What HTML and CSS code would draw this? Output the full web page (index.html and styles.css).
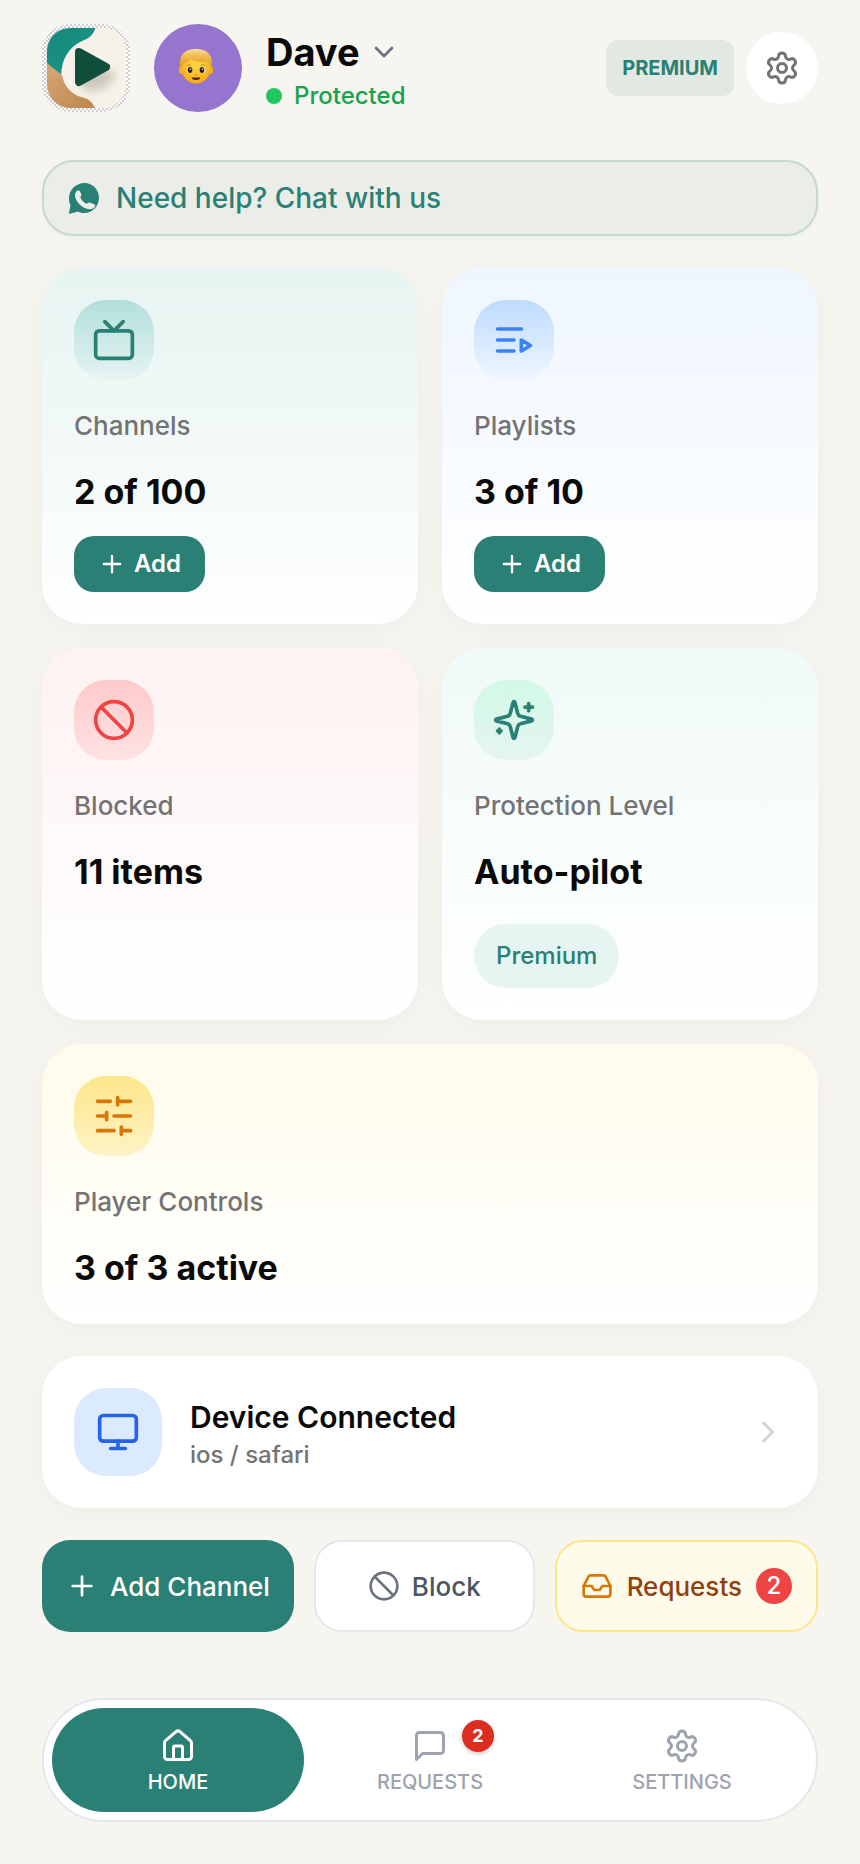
FILE: index.html
```
<!DOCTYPE html>
<html lang="en">
<head>
  <meta charset="UTF-8" />
  <meta name="viewport" content="width=device-width, initial-scale=1.0"/>
  <title>Dashboard</title>
  <link rel="stylesheet" href="styles.css">
</head>
<body>
  <header class="header">
    <svg class="logo" viewBox="0 0 88 88" aria-label="Logo">
      <defs>
        <pattern id="checker" width="4" height="4" patternUnits="userSpaceOnUse">
          <rect width="4" height="4" fill="#fcfcfc"/>
          <path d="M0 0h2v2H0zM2 2h2v2H2z" fill="#cfcfd1"/>
        </pattern>
        <linearGradient id="teal" x1="0" y1="0" x2="1" y2="1">
          <stop offset="0" stop-color="#158477"/>
          <stop offset="1" stop-color="#1b9c8c"/>
        </linearGradient>
        <linearGradient id="sand" x1="0" y1="0" x2="1" y2="1">
          <stop offset="0" stop-color="#d9ab7a"/>
          <stop offset="1" stop-color="#bd8349"/>
        </linearGradient>
        <clipPath id="tile"><rect x="5" y="4" width="79" height="80" rx="23"/></clipPath>
        <filter id="soft" x="-50%" y="-50%" width="200%" height="200%"><feGaussianBlur stdDeviation="4"/></filter>
      </defs>
      <rect width="88" height="88" rx="28" fill="url(#checker)"/>
      <g clip-path="url(#tile)">
        <rect width="88" height="88" fill="#f6f2e9"/>
        <path d="M0 0H54C53 10 48 14 40 17C27 23 20 34 19 51L0 36Z" fill="url(#teal)"/>
        <path d="M0 35L20 51C22 62 29 70 39 73C48 75 52 79 54 88H0Z" fill="url(#sand)"/>
        <path d="M38 34L74 50C68 64 54 70 40 65Z" fill="#8f8879" opacity=".4" filter="url(#soft)"/>
      </g>
      <path d="M37 28L64 43L37 58Z" fill="#0f4f3c" stroke="#0f4f3c" stroke-width="8" stroke-linejoin="round"/>
    </svg>
    <div class="avatar">
      <svg viewBox="0 0 36 36" aria-label="Boy">
        <defs>
          <linearGradient id="hair" x1="0" y1="0" x2="0" y2="1">
            <stop offset="0" stop-color="#fbe0a0"/>
            <stop offset=".3" stop-color="#f3c25a"/>
            <stop offset="1" stop-color="#dc9a24"/>
          </linearGradient>
          <radialGradient id="face" cx=".5" cy=".4" r=".6">
            <stop offset="0" stop-color="#ffd94a"/>
            <stop offset="1" stop-color="#f9ad12"/>
          </radialGradient>
        </defs>
        <ellipse cx="3.5" cy="22" rx="2.5" ry="4" fill="#f5ac1c"/>
        <ellipse cx="32.5" cy="22" rx="2.5" ry="4" fill="#f5ac1c"/>
        <path d="M3.5 15C3.5 6 10 3 18 3S32.5 6 32.5 15V20C32.5 30 25 35.5 18 35.5S3.5 30 3.5 20Z" fill="url(#face)"/>
        <path d="M2 19C1 6 7 1 18 1S35 6 34 19L32 18C32 16 31 14 29 13C24 15 16 14 12 11C12 13 10 14 8 14C6 15 5 16 4 18Z" fill="url(#hair)"/>
        <ellipse cx="11.5" cy="22" rx="2.8" ry="3.2" fill="#fff"/>
        <ellipse cx="24.5" cy="22" rx="2.8" ry="3.2" fill="#fff"/>
        <ellipse cx="12" cy="22" rx="2.4" ry="3" fill="#33200e"/>
        <ellipse cx="24" cy="22" rx="2.4" ry="3" fill="#33200e"/>
        <circle cx="12.5" cy="21" r=".8" fill="#fff"/>
        <circle cx="24.5" cy="21" r=".8" fill="#fff"/>
        <path d="M9 17.5Q11 16 13 17.5M23 17.5Q25 16 27 17.5" fill="none" stroke="#c08420" stroke-width=".8"/>
        <path d="M16.500 26.500Q18 27.500 19.500 26.500" fill="none" stroke="#d58a12" stroke-width="1"/>
        <path d="M13.500 29.500H22.500Q22 32 18 32T13.500 29.500Z" fill="#4a2408"/>
      </svg>
    </div>
    <div class="profile">
      <button class="profile-name">
        Dave
        <svg class="icon icon-sm" viewBox="0 0 24 24"><path d="m6 9 6 6 6-6"/></svg>
      </button>
      <div class="profile-status"><span class="dot"></span>Protected</div>
    </div>
    <span class="plan">PREMIUM</span>
    <button class="round-btn" aria-label="Settings">
      <svg class="icon icon-md" viewBox="0 0 24 24"><path d="M9.671 4.136a2.34 2.34 0 0 1 4.659 0 2.34 2.34 0 0 0 3.319 1.915 2.34 2.34 0 0 1 2.33 4.033 2.34 2.34 0 0 0 0 3.831 2.34 2.34 0 0 1-2.33 4.033 2.34 2.34 0 0 0-3.319 1.915 2.34 2.34 0 0 1-4.659 0 2.34 2.34 0 0 0-3.32-1.915 2.34 2.34 0 0 1-2.33-4.033 2.34 2.34 0 0 0 0-3.831A2.34 2.34 0 0 1 6.35 6.051a2.34 2.34 0 0 0 3.319-1.915"/><circle cx="12" cy="12" r="3"/></svg>
    </button>
  </header>

  <main>
    <a class="help" href="#">
      <svg class="chat-logo" viewBox="0 0 32 32">
        <path d="M16.500 1C24.500 1 31 7.400 31 15.800S24.500 31 16.500 31C14 31 12 30.500 10 29.500Q5.500 30.500 1 32Q1.500 27 2.500 24C1.500 21.500 1 19 1 15.800C1 7.400 8.500 1 16.500 1Z" fill="currentColor"/>
        <path d="M8.500 9.300C9.600 8 11.600 8.200 12.300 9.800L13.300 12.600C13.600 13.700 12.300 14.700 12.500 15.700C13.500 18 15.500 20.200 18 21.600C19.300 22.200 20.300 20.300 21.800 20.600L26 22.300C27.200 22.800 27.600 23.500 27 24.600C26 26.700 23.700 27.600 21.500 27.300C14.200 26.300 7.600 20 7 13.500C6.900 11.900 7.400 10.400 8.500 9.300Z" fill="#ebeee8"/>
      </svg>
      Need help? Chat with us
    </a>

    <div class="grid">
      <section class="card channels">
        <div class="card-icon">
          <svg class="icon icon-lg" viewBox="0 0 24 24"><path d="m17 2-5 5-5-5"/><rect x="2" y="7" width="20" height="15" rx="2"/></svg>
        </div>
        <h2>Channels</h2>
        <p class="value">2 of 100</p>
        <button class="add-btn">
          <svg class="icon icon-xs" viewBox="0 0 24 24"><path d="M5 12h14M12 5v14"/></svg>
          Add
        </button>
      </section>

      <section class="card playlists">
        <div class="card-icon">
          <svg class="icon icon-lg" viewBox="0 0 24 24"><path d="M16 6H3M12 12H3M12 18H3M16 12l5 3-5 3z"/></svg>
        </div>
        <h2>Playlists</h2>
        <p class="value">3 of 10</p>
        <button class="add-btn">
          <svg class="icon icon-xs" viewBox="0 0 24 24"><path d="M5 12h14M12 5v14"/></svg>
          Add
        </button>
      </section>

      <section class="card blocked">
        <div class="card-icon">
          <svg class="icon icon-lg" viewBox="0 0 24 24"><circle cx="12" cy="12" r="10"/><path d="m4.9 4.9 14.2 14.2"/></svg>
        </div>
        <h2>Blocked</h2>
        <p class="value">11 items</p>
      </section>

      <section class="card protection">
        <div class="card-icon">
          <svg class="icon icon-lg" viewBox="0 0 24 24"><path d="M9.937 15.5A2 2 0 0 0 8.5 14.063l-6.135-1.582a.5.5 0 0 1 0-.962L8.5 9.936A2 2 0 0 0 9.937 8.5l1.582-6.135a.5.5 0 0 1 .963 0L14.063 8.5A2 2 0 0 0 15.5 9.937l6.135 1.581a.5.5 0 0 1 0 .964L15.5 14.063a2 2 0 0 0-1.437 1.437l-1.582 6.135a.5.5 0 0 1-.963 0zM20 3v4M22 5h-4M4 17v2M5 18H3"/></svg>
        </div>
        <h2>Protection Level</h2>
        <p class="value">Auto-pilot</p>
        <span class="pill">Premium</span>
      </section>

      <section class="card player">
        <div class="card-icon">
          <svg class="icon icon-lg" viewBox="0 0 24 24"><path d="M21 4h-7M10 4H3M21 12h-9M8 12H3M21 20h-5M12 20H3M14 2v4M8 10v4M16 18v4"/></svg>
        </div>
        <h2>Player Controls</h2>
        <p class="value">3 of 3 active</p>
      </section>
    </div>

    <a class="device" href="#">
      <span class="device-icon">
        <svg class="icon icon-lg" viewBox="0 0 24 24"><rect x="2" y="3" width="20" height="14" rx="2"/><path d="M8 21h8M12 17v4"/></svg>
      </span>
      <span class="device-text">
        <strong>Device Connected</strong>
        <span>ios / safari</span>
      </span>
      <svg class="icon icon-md chevron" viewBox="0 0 24 24"><path d="m9 18 6-6-6-6"/></svg>
    </a>

    <div class="actions">
      <button class="action primary">
        <svg class="icon icon-sm" viewBox="0 0 24 24"><path d="M5 12h14M12 5v14"/></svg>
        Add Channel
      </button>
      <button class="action block">
        <svg class="icon icon-sm" viewBox="0 0 24 24"><circle cx="12" cy="12" r="10"/><path d="m4.9 4.9 14.2 14.2"/></svg>
        Block
      </button>
      <button class="action requests">
        <svg class="icon icon-sm" viewBox="0 0 24 24"><path d="M22 12h-6l-2 3h-4l-2-3H2"/><path d="M5.45 5.11 2 12v6a2 2 0 0 0 2 2h16a2 2 0 0 0 2-2v-6l-3.45-6.89A2 2 0 0 0 16.76 4H7.24a2 2 0 0 0-1.79 1.11z"/></svg>
        Requests
        <span class="count">2</span>
      </button>
    </div>
  </main>

  <nav class="tabs">
    <a class="tab active" href="#">
      <svg class="icon icon-md" viewBox="0 0 24 24"><path d="M15 21v-8a1 1 0 0 0-1-1h-4a1 1 0 0 0-1 1v8"/><path d="M3 10a2 2 0 0 1 .709-1.528l7-5.999a2 2 0 0 1 2.582 0l7 5.999A2 2 0 0 1 21 10v9a2 2 0 0 1-2 2H5a2 2 0 0 1-2-2z"/></svg>
      HOME
    </a>
    <a class="tab" href="#">
      <span class="tab-icon">
        <svg class="icon icon-md" viewBox="0 0 24 24"><path d="M21 15a2 2 0 0 1-2 2H7l-4 4V5a2 2 0 0 1 2-2h14a2 2 0 0 1 2 2z"/></svg>
        <span class="badge">2</span>
      </span>
      REQUESTS
    </a>
    <a class="tab" href="#">
      <svg class="icon icon-md" viewBox="0 0 24 24"><path d="M9.671 4.136a2.34 2.34 0 0 1 4.659 0 2.34 2.34 0 0 0 3.319 1.915 2.34 2.34 0 0 1 2.33 4.033 2.34 2.34 0 0 0 0 3.831 2.34 2.34 0 0 1-2.33 4.033 2.34 2.34 0 0 0-3.319 1.915 2.34 2.34 0 0 1-4.659 0 2.34 2.34 0 0 0-3.32-1.915 2.34 2.34 0 0 1-2.33-4.033 2.34 2.34 0 0 0 0-3.831A2.34 2.34 0 0 1 6.35 6.051a2.34 2.34 0 0 0 3.319-1.915"/><circle cx="12" cy="12" r="3"/></svg>
      SETTINGS
    </a>
  </nav>
</body>
</html>
```
FILE: styles.css
```
* { box-sizing: border-box; margin: 0; padding: 0; }

body {
  background: #f6f5f0;
  color: #0a0a0a;
  font-family: Inter, 'Liberation Sans', sans-serif;
  padding: 24px 42px 42px;
}

button {
  font: inherit;
  color: inherit;
  background: none;
  border: none;
  cursor: pointer;
}

a { color: inherit; text-decoration: none; }

.icon {
  fill: none;
  stroke: currentColor;
  stroke-width: 2;
  stroke-linecap: round;
  stroke-linejoin: round;
  flex-shrink: 0;
  display: block;
}

.icon-xs { width: 28px; height: 28px; }
.icon-sm { width: 32px; height: 32px; }
.icon-md { width: 36px; height: 36px; }
.icon-lg { width: 44px; height: 44px; }

/* Header */
.header {
  display: flex;
  align-items: center;
  margin-bottom: 48px;
}

.logo { width: 88px; height: 88px; flex-shrink: 0; }

.avatar {
  width: 88px;
  height: 88px;
  flex-shrink: 0;
  margin: 0 24px;
  padding: 0 4px 4px 0;
  border-radius: 50%;
  background: #9575cd;
  display: flex;
  align-items: center;
  justify-content: center;
}

.avatar svg { width: 36px; height: 36px; }

.profile {
  flex: 1;
  display: flex;
  flex-direction: column;
  gap: 6px;
  padding-top: 6px;
}

.profile-name {
  display: flex;
  align-items: center;
  gap: 8px;
  font-size: 38px;
  font-weight: 700;
  line-height: 44px;
}

.profile-name .icon { color: #6b7280; }

.profile-status {
  display: flex;
  align-items: center;
  gap: 12px;
  font-size: 24px;
  font-weight: 500;
  line-height: 32px;
  color: #16a34a;
}

.dot {
  width: 16px;
  height: 16px;
  border-radius: 50%;
  background: #22c55e;
}

.plan {
  padding: 14px 16px;
  border-radius: 12px;
  background: #e1e9e2;
  color: #2a8074;
  font-size: 20px;
  font-weight: 700;
  line-height: 28px;
}

.round-btn {
  width: 72px;
  height: 72px;
  margin-left: 12px;
  border-radius: 50%;
  background: #fff;
  color: #737373;
  display: flex;
  align-items: center;
  justify-content: center;
}

/* Help link */
.help {
  display: flex;
  align-items: center;
  gap: 16px;
  padding: 16px 24px;
  margin-bottom: 32px;
  border: 2px solid #c5d9d1;
  border-radius: 32px;
  background: #ebeee8;
  box-shadow: 0 2px 4px rgba(0,0,0,0.04);
  color: #2a8074;
  font-size: 28px;
  font-weight: 500;
  line-height: 40px;
}

.chat-logo { width: 32px; height: 32px; }

/* Cards */
.grid {
  display: grid;
  grid-template-columns: 1fr 1fr;
  gap: 24px;
  margin-bottom: 32px;
}

.card, .device {
  padding: 32px;
  border-radius: 40px;
  background: #fff;
  box-shadow: 0 4px 24px rgba(0,0,0,0.04);
}

.card {
  display: flex;
  flex-direction: column;
  align-items: flex-start;
}

.card-icon {
  width: 80px;
  height: 80px;
  border-radius: 32px;
  display: flex;
  align-items: center;
  justify-content: center;
}

.card h2 {
  margin: 26px 0 22px;
  font-size: 26px;
  font-weight: 500;
  line-height: 40px;
  color: #737373;
}

.value {
  font-size: 34px;
  font-weight: 700;
  line-height: 48px;
}

.channels { background: linear-gradient(#e6f4f2, #fff); }
.channels .card-icon { background: linear-gradient(#b2dfdb, #e6f4f2); color: #2a8074; }

.playlists { background: linear-gradient(#eff6ff, #fff); }
.playlists .card-icon { background: linear-gradient(#bfdbfe, #eff6ff); color: #3b82f6; }

.blocked { background: linear-gradient(#fef2f2, #fff); }
.blocked .card-icon { background: linear-gradient(#fecaca, #fee2e2); color: #ef4444; }

.protection { background: linear-gradient(#f0faf8, #fff); }
.protection .card-icon { background: linear-gradient(#d1fae5, #e6f4f2); color: #2a8074; }

.player { grid-column: 1 / -1; background: linear-gradient(#fffbeb, #fff); }
.player .card-icon { background: linear-gradient(#fde68a, #fef3c7); color: #d97706; }

.add-btn {
  display: flex;
  align-items: center;
  gap: 8px;
  margin-top: 20px;
  padding: 10px 24px;
  border-radius: 20px;
  background: #2a8074;
  color: #fff;
  font-size: 24px;
  font-weight: 600;
  line-height: 36px;
}

.pill {
  margin-top: 28px;
  padding: 14px 22px;
  border-radius: 32px;
  background: #e6f4f2;
  color: #2a8074;
  font-size: 24px;
  font-weight: 500;
  line-height: 36px;
}

/* Device */
.device {
  display: flex;
  align-items: center;
  gap: 28px;
  margin-bottom: 32px;
}

.device-icon {
  width: 88px;
  height: 88px;
  border-radius: 32px;
  background: #dbeafe;
  color: #2563eb;
  display: flex;
  align-items: center;
  justify-content: center;
}

.device-text {
  flex: 1;
  display: flex;
  flex-direction: column;
  padding-top: 6px;
  font-size: 24px;
  font-weight: 500;
  line-height: 36px;
  color: #737373;
}

.device-text strong {
  font-size: 30px;
  font-weight: 600;
  line-height: 40px;
  color: #0a0a0a;
}

.chevron { color: #d1d5db; }

/* Action buttons */
.actions { display: flex; gap: 20px; }

.action {
  flex: 1 1 0;
  display: flex;
  align-items: center;
  justify-content: center;
  gap: 12px;
  height: 92px;
  padding: 0 24px;
  border-radius: 28px;
  font-size: 26px;
  font-weight: 500;
  white-space: nowrap;
}

.primary { background: #2a8074; color: #fff; }

.block { background: #fff; border: 2px solid #e5e7eb; color: #4b5563; }
.block .icon { color: #6b7280; }

.requests { gap: 14px; background: #fffbeb; border: 2px solid #fde68a; color: #92400e; }
.requests .icon { color: #d97706; }

.count {
  width: 36px;
  border-radius: 50%;
  background: #ef4444;
  color: #fff;
  font-size: 24px;
  line-height: 36px;
  text-align: center;
}

/* Bottom tabs */
.tabs {
  display: flex;
  margin-top: 66px;
  padding: 8px;
  border: 2px solid #e5e7eb;
  border-radius: 62px;
  background: #fff;
}

.tab {
  flex: 1;
  display: flex;
  flex-direction: column;
  align-items: center;
  gap: 8px;
  padding: 20px 0;
  border-radius: 52px;
  color: #9ca3af;
  font-size: 20px;
  font-weight: 500;
  line-height: 20px;
}

.tab.active { background: #2a8074; color: #fff; }

.tab-icon { position: relative; }

.badge {
  position: absolute;
  top: -8px;
  left: 50px;
  width: 32px;
  border-radius: 50%;
  background: #dc2d20;
  box-shadow: 0 2px 4px rgba(0,0,0,0.2);
  color: #fff;
  font-size: 18px;
  font-weight: 700;
  line-height: 32px;
  text-align: center;
}
```
